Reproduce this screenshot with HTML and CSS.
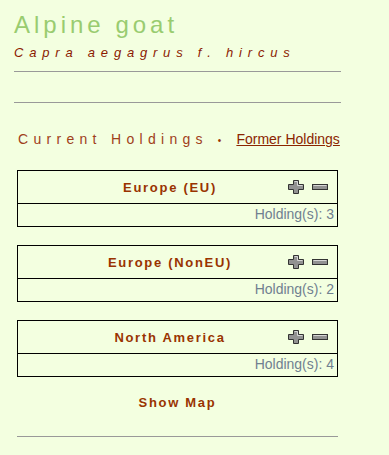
FILE: index.html
```html
<!DOCTYPE html>
<html lang="en">
<head>
  <meta charset="UTF-8" />
  <meta name="viewport" content="width=device-width, initial-scale=1.0"/>
  <title>Alpine goat</title>
  <link rel="stylesheet" href="styles.css">
</head>
<body>
  <div class="page">
    <h1 class="breed">Alpine goat</h1>
    <div class="latin">Capra aegagrus f. hircus</div>
    <hr class="rule">
    <hr class="rule second">

    <div class="inner">
      <div class="tabs">
        <span class="tab-current">Current Holdings</span>
        <span class="bullet">&bull;</span>
        <a href="#" class="tab-link">Former Holdings</a>
      </div>

      <!-- regions -->
      <div class="region">
        <div class="region-head">
          <span class="region-name">Europe (EU)</span>
          <span class="tools">
            <svg class="ico" width="16" height="14" viewBox="0 0 16 14"><path d="M5.5 0.5h5v4h5v5h-5v4h-5v-4h-5v-5h5z" fill="#929292" stroke="#333" stroke-width="1"/><path d="M6.5 1.5h3v4h5" fill="none" stroke="#d6d6d6" stroke-width="1"/></svg>
            <svg class="ico" width="16" height="6" viewBox="0 0 16 6"><rect x="0.5" y="0.5" width="15" height="5" fill="#929292" stroke="#333" stroke-width="1"/><path d="M1.5 1.5h13" stroke="#d6d6d6" stroke-width="1"/></svg>
          </span>
        </div>
        <div class="region-count">Holding(s): 3</div>
      </div>

      <div class="region">
        <div class="region-head">
          <span class="region-name">Europe (NonEU)</span>
          <span class="tools">
            <svg class="ico" width="16" height="14" viewBox="0 0 16 14"><path d="M5.5 0.5h5v4h5v5h-5v4h-5v-4h-5v-5h5z" fill="#929292" stroke="#333" stroke-width="1"/><path d="M6.5 1.5h3v4h5" fill="none" stroke="#d6d6d6" stroke-width="1"/></svg>
            <svg class="ico" width="16" height="6" viewBox="0 0 16 6"><rect x="0.5" y="0.5" width="15" height="5" fill="#929292" stroke="#333" stroke-width="1"/><path d="M1.5 1.5h13" stroke="#d6d6d6" stroke-width="1"/></svg>
          </span>
        </div>
        <div class="region-count">Holding(s): 2</div>
      </div>

      <div class="region">
        <div class="region-head">
          <span class="region-name">North America</span>
          <span class="tools">
            <svg class="ico" width="16" height="14" viewBox="0 0 16 14"><path d="M5.5 0.5h5v4h5v5h-5v4h-5v-4h-5v-5h5z" fill="#929292" stroke="#333" stroke-width="1"/><path d="M6.5 1.5h3v4h5" fill="none" stroke="#d6d6d6" stroke-width="1"/></svg>
            <svg class="ico" width="16" height="6" viewBox="0 0 16 6"><rect x="0.5" y="0.5" width="15" height="5" fill="#929292" stroke="#333" stroke-width="1"/><path d="M1.5 1.5h13" stroke="#d6d6d6" stroke-width="1"/></svg>
          </span>
        </div>
        <div class="region-count">Holding(s): 4</div>
      </div>

      <div class="show-map">Show Map</div>
      <hr class="rule bottom">
    </div>
  </div>
</body>
</html>
```

FILE: styles.css
```css
body {
  margin: 0;
  background: #f3ffe0;
  font-family: "Liberation Sans", Arial, sans-serif;
  color: #993300;
}
.page {
  width: 327px;
  padding: 11px 0 0 14px;
}
/* Header */
.breed {
  margin: 0;
  font-size: 24px;
  line-height: 28px;
  font-weight: normal;
  letter-spacing: 4px;
  color: #99cc70;
}
.latin {
  margin-top: 6px;
  font-size: 13px;
  line-height: 16px;
  font-style: italic;
  letter-spacing: 5.8px;
  color: #8b1a00;
}
.rule {
  margin: 10px 0 0;
  border: none;
  border-top: 1px solid #999;
  height: 0;
}
.rule.second { margin-top: 30px; }
/* Holdings */
.inner {
  padding: 0 3px;
}
.tabs {
  margin-top: 28px;
  padding-left: 1px;
  font-size: 14px;
  line-height: 17px;
  display: flex;
  align-items: baseline;
  white-space: nowrap;
}
.tabs > * { flex-shrink: 0; }
.tab-current { letter-spacing: 5.3px; color: #a0401a; }
.bullet { margin: 0 15px 0 10px; font-size: 10px; }
.tab-link { color: #8b2500; }
.region {
  border: 1px solid #000;
  margin-top: 21px;
}
.region + .region { margin-top: 18px; }
.region-head {
  display: flex;
  align-items: center;
  height: 32px;
  border-bottom: 1px solid #000;
}
.region-name {
  flex: 1;
  text-align: center;
  padding-left: 34px;
  font-size: 13px;
  font-weight: bold;
  letter-spacing: 1.7px;
  color: #993300;
}
.tools {
  display: flex;
  align-items: center;
  gap: 8px;
  padding-right: 9px;
}
.ico { display: block; }
.region-count {
  text-align: right;
  font-size: 14px;
  line-height: 20px;
  padding: 0 3px 2px 0;
  color: #708090;
}
.show-map {
  margin-top: 18px;
  text-align: center;
  font-size: 13px;
  line-height: 16px;
  font-weight: bold;
  letter-spacing: 1.7px;
  color: #993300;
}
.rule.bottom { margin-top: 25px; }
```
